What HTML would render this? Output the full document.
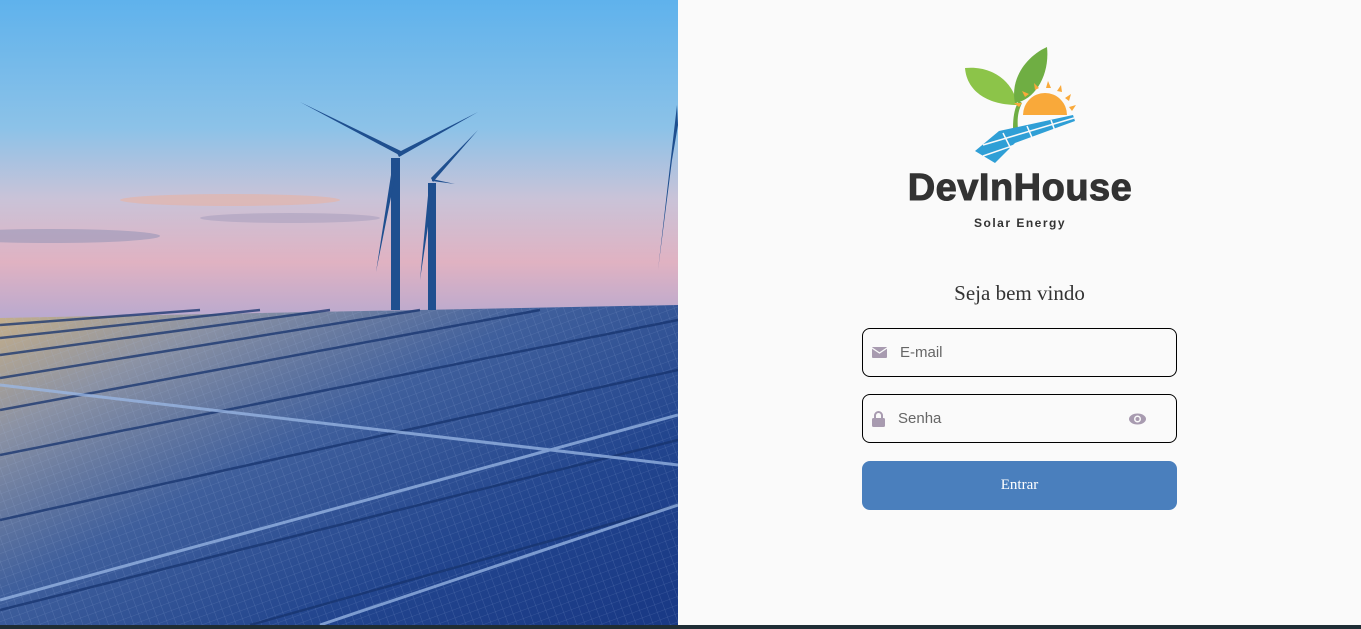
<!DOCTYPE html>
<html><head><meta charset="utf-8"><style>
html,body{margin:0;padding:0;width:1361px;height:629px;overflow:hidden;background:#fafafa;font-family:"Liberation Sans",sans-serif}
.left{position:absolute;left:0;top:0;width:678px;height:625px;overflow:hidden}
.bar{position:absolute;left:0;top:625px;width:1361px;height:4px;background:#1f2d35}
.title{position:absolute;left:862px;top:281px;width:315px;text-align:center;font-family:"Liberation Serif",serif;font-size:21px;color:#333}
.inp{position:absolute;left:862px;width:313px;height:47px;border:1px solid #000;border-radius:8px;background:#fafafa}
.inp span{position:absolute;top:15px;font-size:15px;color:#666}
.btn{position:absolute;left:862px;top:461px;width:315px;height:49px;border-radius:8px;background:#4a7fbd;color:#fff;text-align:center;line-height:49px;font-family:"Liberation Serif",serif;font-size:15px}
</style></head><body>
<div class="left">
<svg width="678" height="625" viewBox="0 0 678 625">
<defs>
<linearGradient id="sky" x1="0" y1="0" x2="0" y2="1">
<stop offset="0" stop-color="#5fb2ec"/><stop offset="0.4" stop-color="#8cc2e8"/><stop offset="0.62" stop-color="#c9c3d8"/><stop offset="0.82" stop-color="#e0b2c2"/><stop offset="1" stop-color="#b8a9cf"/></linearGradient>
<linearGradient id="pan" x1="0" y1="0" x2="1" y2="0.9">
<stop offset="0" stop-color="#c9b188"/><stop offset="0.2" stop-color="#8b92a4"/><stop offset="0.45" stop-color="#3f5f9c"/><stop offset="0.75" stop-color="#22458e"/><stop offset="1" stop-color="#1a3a86"/></linearGradient>
<pattern id="grid" width="8" height="8" patternUnits="userSpaceOnUse" patternTransform="rotate(-20)">
<path d="M0 0 H8 M0 0 V8" stroke="#a8c0e8" stroke-width="0.6" opacity=".35"/></pattern>
</defs>
<rect width="678" height="320" fill="url(#sky)"/>
<ellipse cx="230" cy="200" rx="110" ry="6" fill="#e7b3a4" opacity=".6"/>
<ellipse cx="290" cy="218" rx="90" ry="5" fill="#9d97b8" opacity=".45"/>
<ellipse cx="50" cy="236" rx="110" ry="7" fill="#8d8fb4" opacity=".5"/>
<polygon points="0,318 678,305 678,625 0,625" fill="url(#pan)"/>
<polygon points="0,318 678,305 678,625 0,625" fill="url(#grid)"/>
<g stroke="#16336e" stroke-width="2.5" opacity=".75">
<line x1="0" y1="325" x2="200" y2="310"/><line x1="0" y1="338" x2="260" y2="310"/><line x1="0" y1="355" x2="330" y2="310"/><line x1="0" y1="378" x2="420" y2="310"/><line x1="0" y1="410" x2="540" y2="310"/><line x1="0" y1="455" x2="678" y2="320"/><line x1="0" y1="520" x2="678" y2="370"/><line x1="0" y1="610" x2="678" y2="440"/><line x1="250" y1="625" x2="678" y2="505"/>
</g>
<g stroke="#9ab8e6" stroke-width="3" opacity=".75">
<line x1="0" y1="385" x2="678" y2="465"/><line x1="0" y1="600" x2="678" y2="415"/><line x1="320" y1="625" x2="678" y2="505"/>
</g>
<g fill="#1f4f8f">
<rect x="391" y="158" width="9" height="152"/><rect x="428" y="183" width="8" height="127"/>
<path d="M401 156 L300 102 L403 152 Z"/><path d="M399 157 L478 112 L397 153Z"/><path d="M393 162 L376 272 L398 162Z"/>
<path d="M433 182 L478 130 L431 178Z"/><path d="M432 181 L455 184 L432 179Z"/><path d="M429 185 L420 280 L434 186Z"/>
<path d="M677 105 L658 270 L672 160 L678 125Z"/>
</g>
</svg>
</div>
<svg style="position:absolute;left:955px;top:45px" width="125" height="120" viewBox="0 0 125 120">
<path d="M10 23 C40 20 60 40 62 60 C35 60 12 48 10 23Z" fill="#8cc449"/>
<path d="M92 2 C95 30 80 55 60 58 C55 35 70 12 92 2Z" fill="#6fae43"/>
<path d="M58 84 C58 70 60 62 64 56 L67 58 C63 66 62 74 63 84Z" fill="#6fae43"/>
<path d="M68 70 A22 22 0 0 1 112 70Z" fill="#f9a93a"/>
<g fill="#f9a93a"><path d="M64 62 l-5 -4 l8 0z"/><path d="M70 52 l-3 -6 l7 3z"/><path d="M80 45 l-1 -7 l5 5z"/><path d="M91 43 l2 -7 l3 7z"/><path d="M102 46 l4 -6 l1 7z"/><path d="M110 53 l6 -4 l-2 7z"/><path d="M114 62 l7 -2 l-4 6z"/></g>
<path d="M44 86 L118 70 L120 76 L60 98 L40 118 L20 106Z" fill="#2f9fd6"/>
<g stroke="#fafafa" stroke-width="1.5"><line x1="28" y1="100" x2="119" y2="73"/><line x1="28" y1="111" x2="112" y2="82"/><line x1="48" y1="88" x2="56" y2="104"/><line x1="72" y1="81" x2="78" y2="95"/><line x1="96" y1="75" x2="100" y2="86"/></g>
</svg>
<div style="position:absolute;left:890px;top:167px;width:260px;text-align:center;font-weight:bold;font-size:38px;color:#333;letter-spacing:0.5px;-webkit-text-stroke:1px #333">DevInHouse</div>
<div style="position:absolute;left:900px;top:216px;width:240px;text-align:center;font-weight:bold;font-size:12px;color:#333;letter-spacing:1.5px">Solar Energy</div>
<div class="title">Seja bem vindo</div>
<div class="inp" style="top:328px">
<svg style="position:absolute;left:9px;top:18px" width="15" height="11"><rect width="15" height="11" rx="1" fill="#a89bb0"/><path d="M0 1 L7.5 6 L15 1" stroke="#fafafa" fill="none" stroke-width="1.3"/></svg>
<span style="left:37px">E-mail</span></div>
<div class="inp" style="top:394px">
<svg style="position:absolute;left:9px;top:16px" width="13" height="16"><path d="M3 7 V4.5 a3.5 3.5 0 0 1 7 0 V7" stroke="#a89bb0" stroke-width="2" fill="none"/><rect x="0" y="7" width="13" height="9" rx="1.5" fill="#a89bb0"/></svg>
<span style="left:35px">Senha</span>
<svg style="position:absolute;left:266px;top:18px" width="17" height="12"><ellipse cx="8.5" cy="6" rx="8.5" ry="5.5" fill="#a89bb0"/><circle cx="8.5" cy="6" r="3.5" fill="#fafafa"/><circle cx="8.5" cy="6" r="2" fill="#a89bb0"/></svg>
</div>
<div class="btn">Entrar</div>
<div class="bar"></div>
</body></html>
